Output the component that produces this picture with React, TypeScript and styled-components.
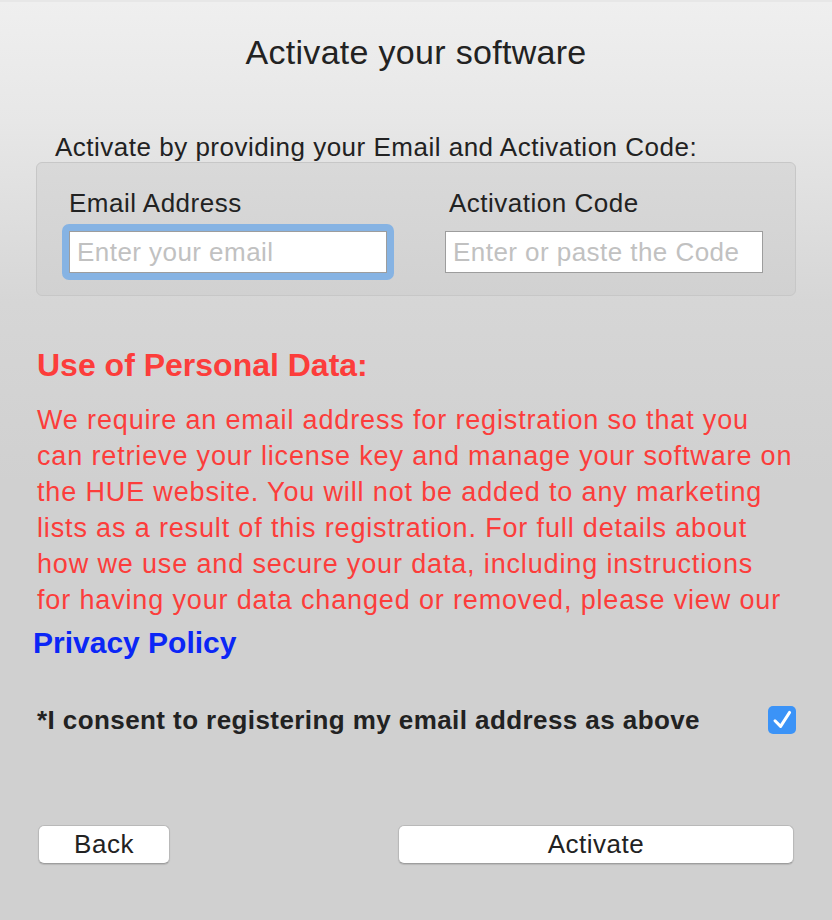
import React, { useState } from 'react';
import styled, { createGlobalStyle } from 'styled-components';

const FONT = '"Liberation Sans", Arial, sans-serif';
const RED = '#fc3d3b';

const GlobalStyle = createGlobalStyle`
  html, body {
    margin: 0;
    padding: 0;
  }
  body {
    font-family: ${FONT};
    color: #222;
  }
`;

const Window = styled.div`
  width: 832px;
  height: 920px;
  box-sizing: border-box;
  border-top: 2px solid #e7e7e7;
  background: linear-gradient(to bottom, #efefef 0px, #e7e7e7 120px, #d6d6d6 300px, #d0d0d0 480px, #d0d0d0 100%);
  display: flex;
  flex-direction: column;
  padding: 0 37px;
`;

const Title = styled.h1`
  margin: 30px 0 0;
  font-size: 34px;
  line-height: 40px;
  font-weight: 400;
  letter-spacing: 0.3px;
  text-align: center;
  color: #222;
`;

const Intro = styled.div`
  margin: 60px 0 0 18px;
  font-size: 26px;
  line-height: 30px;
  letter-spacing: 0.5px;
  color: #222;
  white-space: nowrap;
`;

const GroupBox = styled.div`
  margin: 0 -1px 0 -1px;
  height: 134px;
  box-sizing: border-box;
  border: 1px solid #c7c7c7;
  border-radius: 6px;
  background: linear-gradient(to bottom, #d9d9d9, #d1d1d1);
  display: grid;
  grid-template-columns: 318px 318px;
  column-gap: 58px;
  align-content: start;
  padding: 25px 0 0 32px;
`;

const Field = styled.div`
  display: flex;
  flex-direction: column;
`;

const Label = styled.label<{ $indent?: number }>`
  font-size: 26px;
  line-height: 30px;
  letter-spacing: 0.5px;
  color: #222;
  margin-left: ${(p) => p.$indent ?? 0}px;
  white-space: nowrap;
`;

const FocusRing = styled.div<{ $focused?: boolean }>`
  margin: 6px -7px 0;
  padding: 7px;
  border-radius: 7px;
  background: ${(p) => (p.$focused ? '#86b3e3' : 'transparent')};
`;

const Input = styled.input`
  display: block;
  box-sizing: border-box;
  width: 318px;
  height: 42px;
  margin: 0;
  border: 1px solid #9d9d9d;
  border-radius: 0;
  background: #fff;
  padding: 0 7px;
  font-family: ${FONT};
  font-size: 26px;
  letter-spacing: 0.45px;
  color: #222;
  outline: none;
  &::placeholder {
    color: #c1c1c1;
  }
`;

const Heading = styled.h2`
  margin: 50px 0 0;
  font-size: 32px;
  line-height: 38px;
  font-weight: 700;
  color: ${RED};
`;

const Notice = styled.p`
  margin: 18px 0 0;
  font-size: 27px;
  line-height: 36px;
  letter-spacing: 0.85px;
  color: ${RED};
  white-space: nowrap;
`;

const NoticeLine = styled.span`
  display: block;
`;

const PolicyLink = styled.a`
  align-self: flex-start;
  margin: 7px 0 0 -4px;
  font-size: 30px;
  line-height: 36px;
  font-weight: 700;
  color: #0b26f6;
  text-decoration: none;
  cursor: pointer;
`;

const ConsentRow = styled.div`
  margin-top: 44px;
  display: flex;
  align-items: center;
  justify-content: space-between;
`;

const ConsentText = styled.span`
  font-size: 26px;
  line-height: 30px;
  font-weight: 700;
  letter-spacing: 0.42px;
  color: #222;
  white-space: nowrap;
`;

const CheckBox = styled.button<{ $checked: boolean }>`
  width: 28px;
  height: 28px;
  padding: 0;
  margin-right: -1px;
  border: none;
  border-radius: 5px;
  background: ${(p) => (p.$checked ? '#3b93f7' : '#fff')};
  display: flex;
  align-items: center;
  justify-content: center;
  cursor: pointer;
`;

const ButtonRow = styled.div`
  margin-top: 90px;
  display: flex;
  justify-content: space-between;
  padding: 0 1px;
`;

const Button = styled.button<{ $width: number }>`
  width: ${(p) => p.$width}px;
  height: 39px;
  box-sizing: border-box;
  border: 1px solid #b9b9b9;
  border-bottom-color: #9e9e9e;
  border-radius: 6px;
  background: #fff;
  box-shadow: 0 1px 1px rgba(0, 0, 0, 0.12);
  font-family: ${FONT};
  font-size: 26px;
  letter-spacing: 0.5px;
  color: #222;
  padding: 0;
  cursor: pointer;
`;

const noticeLines = [
  'We require an email address for registration so that you',
  'can retrieve your license key and manage your software on',
  'the HUE website. You will not be added to any marketing',
  'lists as a result of this registration. For full details about',
  'how we use and secure your data, including instructions',
  'for having your data changed or removed, please view our',
];

export default function App() {
  const [checked, setChecked] = useState(true);
  const [focused, setFocused] = useState<'email' | 'code'>('email');

  return (
    <>
      <GlobalStyle />
      <Window>
        <Title>Activate your software</Title>
        <Intro>Activate by providing your Email and Activation Code:</Intro>
        <GroupBox>
          <Field>
            <Label>Email Address</Label>
            <FocusRing $focused={focused === 'email'}>
              <Input placeholder="Enter your email" onFocus={() => setFocused('email')} />
            </FocusRing>
          </Field>
          <Field>
            <Label $indent={4}>Activation Code</Label>
            <FocusRing $focused={focused === 'code'}>
              <Input placeholder="Enter or paste the Code" onFocus={() => setFocused('code')} />
            </FocusRing>
          </Field>
        </GroupBox>
        <Heading>Use of Personal Data:</Heading>
        <Notice>
          {noticeLines.map((line) => (
            <NoticeLine key={line}>{line}</NoticeLine>
          ))}
        </Notice>
        <PolicyLink>Privacy Policy</PolicyLink>
        <ConsentRow>
          <ConsentText>*I consent to registering my email address as above</ConsentText>
          <CheckBox $checked={checked} onClick={() => setChecked(!checked)}>
            {checked && (
              <svg width="28" height="28" viewBox="0 0 28 28">
                <path d="M7 14.8 L12.6 20.4 L21.6 6.4" fill="none" stroke="#fff" strokeWidth="3" strokeLinecap="round" strokeLinejoin="round" />
              </svg>
            )}
          </CheckBox>
        </ConsentRow>
        <ButtonRow>
          <Button $width={132}>Back</Button>
          <Button $width={396}>Activate</Button>
        </ButtonRow>
      </Window>
    </>
  );
}
